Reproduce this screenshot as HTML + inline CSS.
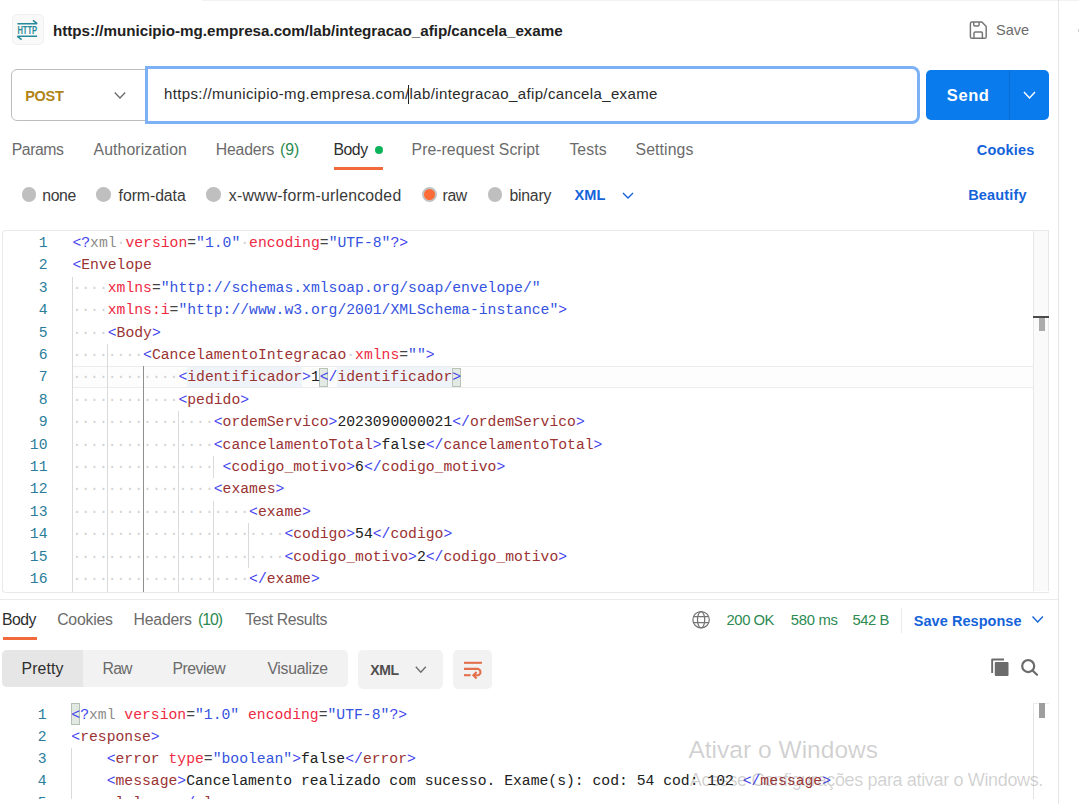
<!DOCTYPE html><html><head><meta charset="utf-8"><style>
html,body{margin:0;padding:0;background:#fff;width:1079px;height:804px;overflow:hidden;position:relative}
.t{position:absolute;white-space:pre;line-height:normal}
.cl{position:absolute;white-space:pre;font-family:'Liberation Mono',monospace}
.ln{position:absolute;white-space:pre;font-family:'Liberation Mono',monospace;text-align:right}
.clip{position:absolute;left:0;top:0;width:1079px;overflow:hidden}
</style></head><body>
<div style="position:absolute;left:202.00px;top:0.00px;width:877.00px;height:1.00px;background:#f2f2f2"></div>
<div style="position:absolute;left:1077.50px;top:28.50px;width:1.50px;height:3.00px;background:#cfcfcf"></div>
<div style="position:absolute;left:1058.00px;top:0.00px;width:1.00px;height:804.00px;background:#e6e6e6"></div>
<div style="position:absolute;left:12.00px;top:14.00px;width:31.50px;height:31.20px;box-sizing:border-box;background:#f9f9f9;border:1px solid #f0f0f0;border-radius:5px"></div>
<svg style="position:absolute;left:12px;top:14px" width="31" height="31" viewBox="0 0 31 31">
<g stroke="#25899a" stroke-width="1.6" fill="none" stroke-linecap="butt" stroke-linejoin="bevel">
<path d="M5.4 9.7 H25.1 L21 6.4"/><path d="M25.1 22.3 H5.4 L9.6 25.6"/></g>
<text x="5.4" y="20.1" font-family="Liberation Sans" font-weight="bold" font-size="11" fill="#25899a" textLength="19.7" lengthAdjust="spacingAndGlyphs">HTTP</text>
</svg>
<svg style="position:absolute;left:968px;top:20px" width="21" height="21" viewBox="0 0 21 21">
<g stroke="#757575" stroke-width="1.45" fill="none" stroke-linejoin="round">
<path d="M4 1.9 H13.9 L18.2 6.4 V16.7 Q18.2 18.3 16.6 18.3 H4 Q2.4 18.3 2.4 16.7 V3.5 Q2.4 1.9 4 1.9 Z"/><path d="M5.7 1.9 V4.7 Q5.7 5.9 6.9 5.9 H9.9 Q11.1 5.9 11.1 4.7 V1.9"/><path d="M6 18.3 V13.2 Q6 12 7.2 12 H13.2 Q14.4 12 14.4 13.2 V18.3"/></g></svg>
<div style="position:absolute;left:11.00px;top:68.60px;width:160.00px;height:52.00px;box-sizing:border-box;border:1px solid #bdbdbd;border-radius:6px;background:#fff"></div>
<svg style="position:absolute;left:112px;top:90px" width="16" height="11" viewBox="0 0 16 11"><path d="M2.7 2.5 L8 8 L13.2 2.5" stroke="#6b6b6b" stroke-width="1.3" fill="none"/></svg>
<div style="position:absolute;left:144.80px;top:66.40px;width:775.40px;height:57.20px;box-sizing:border-box;border:3.5px solid #7db1f5;border-radius:0 8px 8px 0;background:#fff"></div>
<div style="position:absolute;left:408.00px;top:85.00px;width:1.20px;height:19.00px;background:#212121"></div>
<div style="position:absolute;left:926.00px;top:70.00px;width:123.00px;height:50.00px;background:#097bed;border-radius:5px"></div>
<div style="position:absolute;left:1009.00px;top:70.00px;width:1.00px;height:50.00px;background:#0a6dd4"></div>
<svg style="position:absolute;left:1021px;top:89px" width="17" height="12" viewBox="0 0 17 12"><path d="M3 3 L8.5 9 L14 3" stroke="#fff" stroke-width="1.4" fill="none"/></svg>
<div style="position:absolute;left:374.60px;top:146.00px;width:8.00px;height:8.00px;background:#0cb35a;border-radius:50%"></div>
<div style="position:absolute;left:334.00px;top:167.00px;width:48.50px;height:3.00px;background:#f26a3c"></div>
<div style="position:absolute;left:21.70px;top:187.20px;width:14.60px;height:14.60px;background:#bfbfbf;border-radius:50%"></div>
<div style="position:absolute;left:96.10px;top:187.20px;width:14.60px;height:14.60px;background:#bfbfbf;border-radius:50%"></div>
<div style="position:absolute;left:206.40px;top:187.20px;width:14.60px;height:14.60px;background:#bfbfbf;border-radius:50%"></div>
<div style="position:absolute;left:487.70px;top:187.20px;width:14.60px;height:14.60px;background:#bfbfbf;border-radius:50%"></div>
<div style="position:absolute;left:421.90px;top:186.90px;width:15.20px;height:15.20px;box-sizing:border-box;background:#ff6c37;border:2.2px solid #c2c2c2;border-radius:50%"></div>
<svg style="position:absolute;left:620px;top:189px" width="16" height="12" viewBox="0 0 16 12"><path d="M3 4 L8 9 L13 4" stroke="#1563da" stroke-width="1.4" fill="none"/></svg>
<div style="position:absolute;left:2.00px;top:230.00px;width:1047.00px;height:363.00px;box-sizing:border-box;border:1px solid #e9e9e9;border-right:none;border-radius:4px 0 0 4px;background:#fff"></div>
<div style="position:absolute;left:72.00px;top:366.00px;width:977.00px;height:21.50px;box-sizing:border-box;border:1px solid #ececec;border-right:none;background:#fdfdfd"></div>
<div style="position:absolute;left:187.27px;top:366.80px;width:114.87px;height:20.00px;background:#eef4fa"></div>
<div style="position:absolute;left:337.48px;top:366.80px;width:114.87px;height:20.00px;background:#eef4fa"></div>
<div style="position:absolute;left:319.21px;top:367.50px;width:9.00px;height:19.00px;box-sizing:border-box;background:#e3eae3;border:1px solid #b8c2b8"></div>
<div style="position:absolute;left:451.75px;top:367.50px;width:9.00px;height:19.00px;box-sizing:border-box;background:#e3eae3;border:1px solid #b8c2b8"></div>
<div style="position:absolute;left:1032.50px;top:230.50px;width:16.50px;height:360.00px;box-sizing:border-box;background:#fafafa;border-left:1px solid #e8e8e8;border-right:1px solid #e8e8e8"></div>
<div style="position:absolute;left:1033.00px;top:315.50px;width:16.00px;height:2.00px;background:#4a4a4a"></div>
<div style="position:absolute;left:1038.50px;top:318.00px;width:6.30px;height:13.30px;background:#ababab"></div>
<div style="position:absolute;left:72.00px;top:276.70px;width:1.00px;height:315.30px;background:#dadada"></div>
<div style="position:absolute;left:107.00px;top:343.90px;width:1.00px;height:248.10px;background:#dadada"></div>
<div style="position:absolute;left:178.00px;top:411.10px;width:1.00px;height:180.90px;background:#dadada"></div>
<div style="position:absolute;left:213.00px;top:455.90px;width:1.00px;height:22.40px;background:#dadada"></div>
<div style="position:absolute;left:213.00px;top:500.70px;width:1.00px;height:91.30px;background:#dadada"></div>
<div style="position:absolute;left:248.00px;top:523.10px;width:1.00px;height:44.80px;background:#dadada"></div>
<div style="position:absolute;left:143.00px;top:366.30px;width:1.00px;height:225.70px;background:#8f8f8f"></div>
<div style="position:absolute;left:0.00px;top:599.00px;width:1058.00px;height:1.00px;background:#ebebeb"></div>
<div style="position:absolute;left:2.50px;top:637.00px;width:34.50px;height:3.00px;background:#f26a3c"></div>
<svg style="position:absolute;left:690px;top:609px" width="22" height="22" viewBox="0 0 22 22"><g stroke="#747474" stroke-width="1.25" fill="none">
<circle cx="11.1" cy="10.7" r="8.2"/><ellipse cx="11.1" cy="10.7" rx="3.6" ry="8.2"/><path d="M3.5 7.7 H18.7 M3.5 13.6 H18.7"/></g></svg>
<div style="position:absolute;left:900.50px;top:608.00px;width:1.00px;height:24.50px;background:#ebebeb"></div>
<svg style="position:absolute;left:1030px;top:613px" width="16" height="12" viewBox="0 0 16 12"><path d="M2.5 3.5 L7.7 9 L12.9 3.5" stroke="#1563da" stroke-width="1.4" fill="none"/></svg>
<div style="position:absolute;left:2.00px;top:649.60px;width:345.80px;height:37.80px;background:#f2f2f2;border-radius:5px"></div>
<div style="position:absolute;left:2.00px;top:649.60px;width:81.40px;height:37.80px;background:#e6e6e6;border-radius:5px 0 0 5px"></div>
<div style="position:absolute;left:358.00px;top:649.70px;width:85.00px;height:39.50px;background:#f2f2f2;border-radius:5px"></div>
<svg style="position:absolute;left:413px;top:663px" width="16" height="12" viewBox="0 0 16 12"><path d="M2.8 3.7 L7.8 9.3 L12.8 3.7" stroke="#6b6b6b" stroke-width="1.3" fill="none"/></svg>
<div style="position:absolute;left:453.30px;top:649.70px;width:38.90px;height:39.50px;background:#f2f2f2;border-radius:5px"></div>
<svg style="position:absolute;left:455px;top:652px" width="40" height="36" viewBox="0 0 40 36"><g stroke="#e36e4a" stroke-width="2.1" fill="none" stroke-linecap="butt">
<path d="M9 10.8 H26.9"/><path d="M9 16.9 H23.2 A3.4 3.4 0 0 1 23.2 23.3 H18.8"/><path d="M9 23.2 H15.5"/><path d="M21.6 20 L18.4 23.3 L21.6 26.6"/></g></svg>
<svg style="position:absolute;left:988px;top:655px" width="54" height="24" viewBox="0 0 54 24"><g fill="#6b6b6b">
<path d="M4.2 3.6 H16 V5.4 H5.1 V18 H3.2 V4.6 Q3.2 3.6 4.2 3.6 Z"/><rect x="6.8" y="7" width="13.7" height="14.1" rx="1"/></g>
<g stroke="#6b6b6b" stroke-width="2.2" fill="none" stroke-linecap="round"><circle cx="40.2" cy="11.1" r="6"/><path d="M44.5 15.5 L49 19.8"/></g></svg>
<div style="position:absolute;left:71.00px;top:702.80px;width:8.80px;height:21.80px;box-sizing:border-box;background:#e2e9e2;border:1px solid #b5c0b5"></div>
<div style="position:absolute;left:71.00px;top:747.80px;width:1.00px;height:51.20px;background:#dadada"></div>
<div style="position:absolute;left:1033.00px;top:702.80px;width:1.00px;height:96.40px;background:#e4e4e4"></div>
<div style="position:absolute;left:1033.00px;top:702.80px;width:16.00px;height:1.00px;background:#ededed"></div>
<div style="position:absolute;left:1038.60px;top:703.00px;width:6.50px;height:15.40px;background:#9e9e9e"></div>
<div class="clip" style="top:231px;height:361px"><div style="position:absolute;left:0;top:-231px;width:1079px;height:804px">
<div class="ln" style="left:7.50px;top:231.90px;width:40px;font-size:14.73px;line-height:22.40px;color:#2a7e9a">1</div>
<div class="ln" style="left:7.50px;top:254.30px;width:40px;font-size:14.73px;line-height:22.40px;color:#2a7e9a">2</div>
<div class="ln" style="left:7.50px;top:276.70px;width:40px;font-size:14.73px;line-height:22.40px;color:#2a7e9a">3</div>
<div class="ln" style="left:7.50px;top:299.10px;width:40px;font-size:14.73px;line-height:22.40px;color:#2a7e9a">4</div>
<div class="ln" style="left:7.50px;top:321.50px;width:40px;font-size:14.73px;line-height:22.40px;color:#2a7e9a">5</div>
<div class="ln" style="left:7.50px;top:343.90px;width:40px;font-size:14.73px;line-height:22.40px;color:#2a7e9a">6</div>
<div class="ln" style="left:7.50px;top:366.30px;width:40px;font-size:14.73px;line-height:22.40px;color:#2a7e9a">7</div>
<div class="ln" style="left:7.50px;top:388.70px;width:40px;font-size:14.73px;line-height:22.40px;color:#2a7e9a">8</div>
<div class="ln" style="left:7.50px;top:411.10px;width:40px;font-size:14.73px;line-height:22.40px;color:#2a7e9a">9</div>
<div class="ln" style="left:7.50px;top:433.50px;width:40px;font-size:14.73px;line-height:22.40px;color:#2a7e9a">10</div>
<div class="ln" style="left:7.50px;top:455.90px;width:40px;font-size:14.73px;line-height:22.40px;color:#2a7e9a">11</div>
<div class="ln" style="left:7.50px;top:478.30px;width:40px;font-size:14.73px;line-height:22.40px;color:#2a7e9a">12</div>
<div class="ln" style="left:7.50px;top:500.70px;width:40px;font-size:14.73px;line-height:22.40px;color:#2a7e9a">13</div>
<div class="ln" style="left:7.50px;top:523.10px;width:40px;font-size:14.73px;line-height:22.40px;color:#2a7e9a">14</div>
<div class="ln" style="left:7.50px;top:545.50px;width:40px;font-size:14.73px;line-height:22.40px;color:#2a7e9a">15</div>
<div class="ln" style="left:7.50px;top:567.90px;width:40px;font-size:14.73px;line-height:22.40px;color:#2a7e9a">16</div>
<div class="cl" style="left:72.40px;top:231.90px;font-size:14.73px;line-height:22.40px"><span style="color:#4242ee">&lt;?</span><span style="color:#8c8c8c">xml</span><span style="color:#d2d2d2">·</span><span style="color:#ee2a44">version</span><span style="color:#444444">=</span><span style="color:#3553e0">"1.0"</span><span style="color:#d2d2d2">·</span><span style="color:#ee2a44">encoding</span><span style="color:#444444">=</span><span style="color:#3553e0">"UTF-8"</span><span style="color:#4242ee">?&gt;</span></div>
<div class="cl" style="left:72.40px;top:254.30px;font-size:14.73px;line-height:22.40px"><span style="color:#4242ee">&lt;</span><span style="color:#9a3333">Envelope</span></div>
<div class="cl" style="left:72.40px;top:276.70px;font-size:14.73px;line-height:22.40px"><span style="color:#d2d2d2">····</span><span style="color:#ee2a44">xmlns</span><span style="color:#444444">=</span><span style="color:#3553e0">"http://schemas.xmlsoap.org/soap/envelope/"</span></div>
<div class="cl" style="left:72.40px;top:299.10px;font-size:14.73px;line-height:22.40px"><span style="color:#d2d2d2">····</span><span style="color:#ee2a44">xmlns:i</span><span style="color:#444444">=</span><span style="color:#3553e0">"http://www.w3.org/2001/XMLSchema-instance"</span><span style="color:#4242ee">&gt;</span></div>
<div class="cl" style="left:72.40px;top:321.50px;font-size:14.73px;line-height:22.40px"><span style="color:#d2d2d2">····</span><span style="color:#4242ee">&lt;</span><span style="color:#9a3333">Body</span><span style="color:#4242ee">&gt;</span></div>
<div class="cl" style="left:72.40px;top:343.90px;font-size:14.73px;line-height:22.40px"><span style="color:#d2d2d2">········</span><span style="color:#4242ee">&lt;</span><span style="color:#9a3333">CancelamentoIntegracao</span><span style="color:#d2d2d2">·</span><span style="color:#ee2a44">xmlns</span><span style="color:#444444">=</span><span style="color:#3553e0">""</span><span style="color:#4242ee">&gt;</span></div>
<div class="cl" style="left:72.40px;top:366.30px;font-size:14.73px;line-height:22.40px"><span style="color:#d2d2d2">············</span><span style="color:#4242ee">&lt;</span><span style="color:#9a3333">identificador</span><span style="color:#4242ee">&gt;</span><span style="color:#212121">1</span><span style="color:#4242ee">&lt;/</span><span style="color:#9a3333">identificador</span><span style="color:#4242ee">&gt;</span></div>
<div class="cl" style="left:72.40px;top:388.70px;font-size:14.73px;line-height:22.40px"><span style="color:#d2d2d2">············</span><span style="color:#4242ee">&lt;</span><span style="color:#9a3333">pedido</span><span style="color:#4242ee">&gt;</span></div>
<div class="cl" style="left:72.40px;top:411.10px;font-size:14.73px;line-height:22.40px"><span style="color:#d2d2d2">················</span><span style="color:#4242ee">&lt;</span><span style="color:#9a3333">ordemServico</span><span style="color:#4242ee">&gt;</span><span style="color:#212121">2023090000021</span><span style="color:#4242ee">&lt;/</span><span style="color:#9a3333">ordemServico</span><span style="color:#4242ee">&gt;</span></div>
<div class="cl" style="left:72.40px;top:433.50px;font-size:14.73px;line-height:22.40px"><span style="color:#d2d2d2">················</span><span style="color:#4242ee">&lt;</span><span style="color:#9a3333">cancelamentoTotal</span><span style="color:#4242ee">&gt;</span><span style="color:#212121">false</span><span style="color:#4242ee">&lt;/</span><span style="color:#9a3333">cancelamentoTotal</span><span style="color:#4242ee">&gt;</span></div>
<div class="cl" style="left:72.40px;top:455.90px;font-size:14.73px;line-height:22.40px"><span style="color:#d2d2d2">················</span><span style="color:#212121"> </span><span style="color:#4242ee">&lt;</span><span style="color:#9a3333">codigo_motivo</span><span style="color:#4242ee">&gt;</span><span style="color:#212121">6</span><span style="color:#4242ee">&lt;/</span><span style="color:#9a3333">codigo_motivo</span><span style="color:#4242ee">&gt;</span></div>
<div class="cl" style="left:72.40px;top:478.30px;font-size:14.73px;line-height:22.40px"><span style="color:#d2d2d2">················</span><span style="color:#4242ee">&lt;</span><span style="color:#9a3333">exames</span><span style="color:#4242ee">&gt;</span></div>
<div class="cl" style="left:72.40px;top:500.70px;font-size:14.73px;line-height:22.40px"><span style="color:#d2d2d2">····················</span><span style="color:#4242ee">&lt;</span><span style="color:#9a3333">exame</span><span style="color:#4242ee">&gt;</span></div>
<div class="cl" style="left:72.40px;top:523.10px;font-size:14.73px;line-height:22.40px"><span style="color:#d2d2d2">························</span><span style="color:#4242ee">&lt;</span><span style="color:#9a3333">codigo</span><span style="color:#4242ee">&gt;</span><span style="color:#212121">54</span><span style="color:#4242ee">&lt;/</span><span style="color:#9a3333">codigo</span><span style="color:#4242ee">&gt;</span></div>
<div class="cl" style="left:72.40px;top:545.50px;font-size:14.73px;line-height:22.40px"><span style="color:#d2d2d2">························</span><span style="color:#4242ee">&lt;</span><span style="color:#9a3333">codigo_motivo</span><span style="color:#4242ee">&gt;</span><span style="color:#212121">2</span><span style="color:#4242ee">&lt;/</span><span style="color:#9a3333">codigo_motivo</span><span style="color:#4242ee">&gt;</span></div>
<div class="cl" style="left:72.40px;top:567.90px;font-size:14.73px;line-height:22.40px"><span style="color:#d2d2d2">····················</span><span style="color:#4242ee">&lt;/</span><span style="color:#9a3333">exame</span><span style="color:#4242ee">&gt;</span></div>
</div></div>
<div class="clip" style="top:700px;height:98.5px"><div style="position:absolute;left:0;top:-700px;width:1079px;height:804px">
<div class="ln" style="left:6.50px;top:703.60px;width:40px;font-size:14.73px;line-height:22.20px;color:#2a7e9a">1</div>
<div class="ln" style="left:6.50px;top:725.80px;width:40px;font-size:14.73px;line-height:22.20px;color:#2a7e9a">2</div>
<div class="ln" style="left:6.50px;top:748.00px;width:40px;font-size:14.73px;line-height:22.20px;color:#2a7e9a">3</div>
<div class="ln" style="left:6.50px;top:770.20px;width:40px;font-size:14.73px;line-height:22.20px;color:#2a7e9a">4</div>
<div class="ln" style="left:6.50px;top:792.40px;width:40px;font-size:14.73px;line-height:22.20px;color:#2a7e9a">5</div>
<div class="cl" style="left:71.30px;top:703.60px;font-size:14.73px;line-height:22.20px"><span style="color:#4242ee">&lt;?</span><span style="color:#8c8c8c">xml</span><span style="color:#212121"> </span><span style="color:#ee2a44">version</span><span style="color:#444444">=</span><span style="color:#3553e0">"1.0"</span><span style="color:#212121"> </span><span style="color:#ee2a44">encoding</span><span style="color:#444444">=</span><span style="color:#3553e0">"UTF-8"</span><span style="color:#4242ee">?&gt;</span></div>
<div class="cl" style="left:71.30px;top:725.80px;font-size:14.73px;line-height:22.20px"><span style="color:#4242ee">&lt;</span><span style="color:#9a3333">response</span><span style="color:#4242ee">&gt;</span></div>
<div class="cl" style="left:71.30px;top:748.00px;font-size:14.73px;line-height:22.20px"><span style="color:#212121">    </span><span style="color:#4242ee">&lt;</span><span style="color:#9a3333">error</span><span style="color:#212121"> </span><span style="color:#ee2a44">type</span><span style="color:#444444">=</span><span style="color:#3553e0">"boolean"</span><span style="color:#4242ee">&gt;</span><span style="color:#212121">false</span><span style="color:#4242ee">&lt;/</span><span style="color:#9a3333">error</span><span style="color:#4242ee">&gt;</span></div>
<div class="cl" style="left:71.30px;top:770.20px;font-size:14.73px;line-height:22.20px"><span style="color:#212121">    </span><span style="color:#4242ee">&lt;</span><span style="color:#9a3333">message</span><span style="color:#4242ee">&gt;</span><span style="color:#212121">Cancelamento realizado com sucesso. Exame(s): cod: 54 cod: 102 </span><span style="color:#4242ee">&lt;/</span><span style="color:#9a3333">message</span><span style="color:#4242ee">&gt;</span></div>
<div class="cl" style="left:71.30px;top:792.40px;font-size:14.73px;line-height:22.20px"><span style="color:#212121">     </span><span style="color:#9a3333">l l</span><span style="color:#212121">     </span><span style="color:#4242ee">/</span><span style="color:#212121"> </span><span style="color:#9a3333">l</span></div>
</div></div>
<div class="t" id="t0" style="left:53.00px;top:22.30px;font-family:'Liberation Sans', sans-serif;font-size:15.20px;font-weight:bold;color:#212121;letter-spacing:-0.015px">https://municipio-mg.empresa.com/lab/integracao_afip/cancela_exame</div>
<div class="t" id="t1" style="left:996.00px;top:22.30px;font-family:'Liberation Sans', sans-serif;font-size:14.50px;font-weight:normal;color:#6b6b6b;letter-spacing:0.000px">Save</div>
<div class="t" id="t2" style="left:25.20px;top:88.20px;font-family:'Liberation Sans', sans-serif;font-size:14.50px;font-weight:bold;color:#b08419;letter-spacing:-0.267px">POST</div>
<div class="t" id="t3" style="left:164.00px;top:85.20px;font-family:'Liberation Sans', sans-serif;font-size:15.00px;font-weight:normal;color:#2a2a2a;letter-spacing:0.369px">https://municipio-mg.empresa.com/lab/integracao_afip/cancela_exame</div>
<div class="t" id="t4" style="left:946.80px;top:85.80px;font-family:'Liberation Sans', sans-serif;font-size:16.50px;font-weight:bold;color:#ffffff;letter-spacing:0.600px">Send</div>
<div class="t" id="t5" style="left:11.80px;top:140.90px;font-family:'Liberation Sans', sans-serif;font-size:15.80px;font-weight:normal;color:#6b6b6b;letter-spacing:-0.480px">Params</div>
<div class="t" id="t6" style="left:93.60px;top:140.90px;font-family:'Liberation Sans', sans-serif;font-size:15.80px;font-weight:normal;color:#6b6b6b;letter-spacing:0.083px">Authorization</div>
<div class="t" id="t7" style="left:215.80px;top:140.90px;font-family:'Liberation Sans', sans-serif;font-size:15.80px;font-weight:normal;color:#6b6b6b;letter-spacing:-0.183px">Headers</div>
<div class="t" id="t8" style="left:280.00px;top:140.90px;font-family:'Liberation Sans', sans-serif;font-size:15.80px;font-weight:normal;color:#2c8a52;letter-spacing:0.000px">(9)</div>
<div class="t" id="t9" style="left:333.40px;top:140.90px;font-family:'Liberation Sans', sans-serif;font-size:15.80px;font-weight:normal;color:#2e2e2e;letter-spacing:-0.433px">Body</div>
<div class="t" id="t10" style="left:411.60px;top:140.90px;font-family:'Liberation Sans', sans-serif;font-size:15.80px;font-weight:normal;color:#6b6b6b;letter-spacing:0.029px">Pre-request Script</div>
<div class="t" id="t11" style="left:569.40px;top:140.90px;font-family:'Liberation Sans', sans-serif;font-size:15.80px;font-weight:normal;color:#6b6b6b;letter-spacing:0.075px">Tests</div>
<div class="t" id="t12" style="left:635.60px;top:140.90px;font-family:'Liberation Sans', sans-serif;font-size:15.80px;font-weight:normal;color:#6b6b6b;letter-spacing:0.086px">Settings</div>
<div class="t" id="t13" style="left:976.80px;top:142.00px;font-family:'Liberation Sans', sans-serif;font-size:14.50px;font-weight:bold;color:#1563da;letter-spacing:0.167px">Cookies</div>
<div class="t" id="t14" style="left:42.20px;top:187.00px;font-family:'Liberation Sans', sans-serif;font-size:15.80px;font-weight:normal;color:#3a3a3a;letter-spacing:-0.333px">none</div>
<div class="t" id="t15" style="left:118.60px;top:187.00px;font-family:'Liberation Sans', sans-serif;font-size:15.80px;font-weight:normal;color:#3a3a3a;letter-spacing:-0.062px">form-data</div>
<div class="t" id="t16" style="left:228.80px;top:187.00px;font-family:'Liberation Sans', sans-serif;font-size:15.80px;font-weight:normal;color:#3a3a3a;letter-spacing:0.235px">x-www-form-urlencoded</div>
<div class="t" id="t17" style="left:442.60px;top:187.00px;font-family:'Liberation Sans', sans-serif;font-size:15.80px;font-weight:normal;color:#3a3a3a;letter-spacing:-0.400px">raw</div>
<div class="t" id="t18" style="left:509.40px;top:187.00px;font-family:'Liberation Sans', sans-serif;font-size:15.80px;font-weight:normal;color:#3a3a3a;letter-spacing:-0.200px">binary</div>
<div class="t" id="t19" style="left:574.60px;top:186.60px;font-family:'Liberation Sans', sans-serif;font-size:14.50px;font-weight:bold;color:#1563da;letter-spacing:0.050px">XML</div>
<div class="t" id="t20" style="left:968.20px;top:186.80px;font-family:'Liberation Sans', sans-serif;font-size:14.50px;font-weight:bold;color:#1563da;letter-spacing:0.171px">Beautify</div>
<div class="t" id="t21" style="left:2.00px;top:610.80px;font-family:'Liberation Sans', sans-serif;font-size:15.80px;font-weight:normal;color:#2e2e2e;letter-spacing:-0.500px">Body</div>
<div class="t" id="t22" style="left:57.20px;top:610.80px;font-family:'Liberation Sans', sans-serif;font-size:15.80px;font-weight:normal;color:#6b6b6b;letter-spacing:-0.233px">Cookies</div>
<div class="t" id="t23" style="left:133.60px;top:610.80px;font-family:'Liberation Sans', sans-serif;font-size:15.80px;font-weight:normal;color:#6b6b6b;letter-spacing:-0.217px">Headers</div>
<div class="t" id="t24" style="left:198.00px;top:610.80px;font-family:'Liberation Sans', sans-serif;font-size:15.80px;font-weight:normal;color:#2c8a52;letter-spacing:-1.067px">(10)</div>
<div class="t" id="t25" style="left:245.20px;top:610.80px;font-family:'Liberation Sans', sans-serif;font-size:15.80px;font-weight:normal;color:#6b6b6b;letter-spacing:-0.355px">Test Results</div>
<div class="t" id="t26" style="left:726.60px;top:611.90px;font-family:'Liberation Sans', sans-serif;font-size:14.80px;font-weight:normal;color:#2c8a52;letter-spacing:-0.460px">200 OK</div>
<div class="t" id="t27" style="left:790.80px;top:611.90px;font-family:'Liberation Sans', sans-serif;font-size:14.80px;font-weight:normal;color:#2c8a52;letter-spacing:-0.260px">580 ms</div>
<div class="t" id="t28" style="left:852.60px;top:611.90px;font-family:'Liberation Sans', sans-serif;font-size:14.80px;font-weight:normal;color:#2c8a52;letter-spacing:-0.475px">542 B</div>
<div class="t" id="t29" style="left:913.80px;top:613.00px;font-family:'Liberation Sans', sans-serif;font-size:14.50px;font-weight:bold;color:#1563da;letter-spacing:0.042px">Save Response</div>
<div class="t" id="t30" style="left:21.60px;top:659.70px;font-family:'Liberation Sans', sans-serif;font-size:15.80px;font-weight:normal;color:#2e2e2e;letter-spacing:0.100px">Pretty</div>
<div class="t" id="t31" style="left:102.60px;top:659.70px;font-family:'Liberation Sans', sans-serif;font-size:15.80px;font-weight:normal;color:#6b6b6b;letter-spacing:-0.850px">Raw</div>
<div class="t" id="t32" style="left:172.40px;top:659.70px;font-family:'Liberation Sans', sans-serif;font-size:15.80px;font-weight:normal;color:#6b6b6b;letter-spacing:-0.483px">Preview</div>
<div class="t" id="t33" style="left:267.40px;top:659.70px;font-family:'Liberation Sans', sans-serif;font-size:15.80px;font-weight:normal;color:#6b6b6b;letter-spacing:-0.275px">Visualize</div>
<div class="t" id="t34" style="left:370.20px;top:662.00px;font-family:'Liberation Sans', sans-serif;font-size:14.00px;font-weight:bold;color:#4f4f4f;letter-spacing:-0.400px">XML</div>
<div class="t" id="t35" style="left:688.40px;top:735.70px;font-family:'Liberation Sans', sans-serif;font-size:24.50px;font-weight:normal;color:rgba(70,70,70,0.25);letter-spacing:0.027px">Ativar o Windows</div>
<div class="t" id="t36" style="left:689.80px;top:769.90px;font-family:'Liberation Sans', sans-serif;font-size:18.00px;font-weight:normal;color:rgba(70,70,70,0.25);letter-spacing:-0.348px">Acesse Configurações para ativar o Windows.</div>
</body></html>
